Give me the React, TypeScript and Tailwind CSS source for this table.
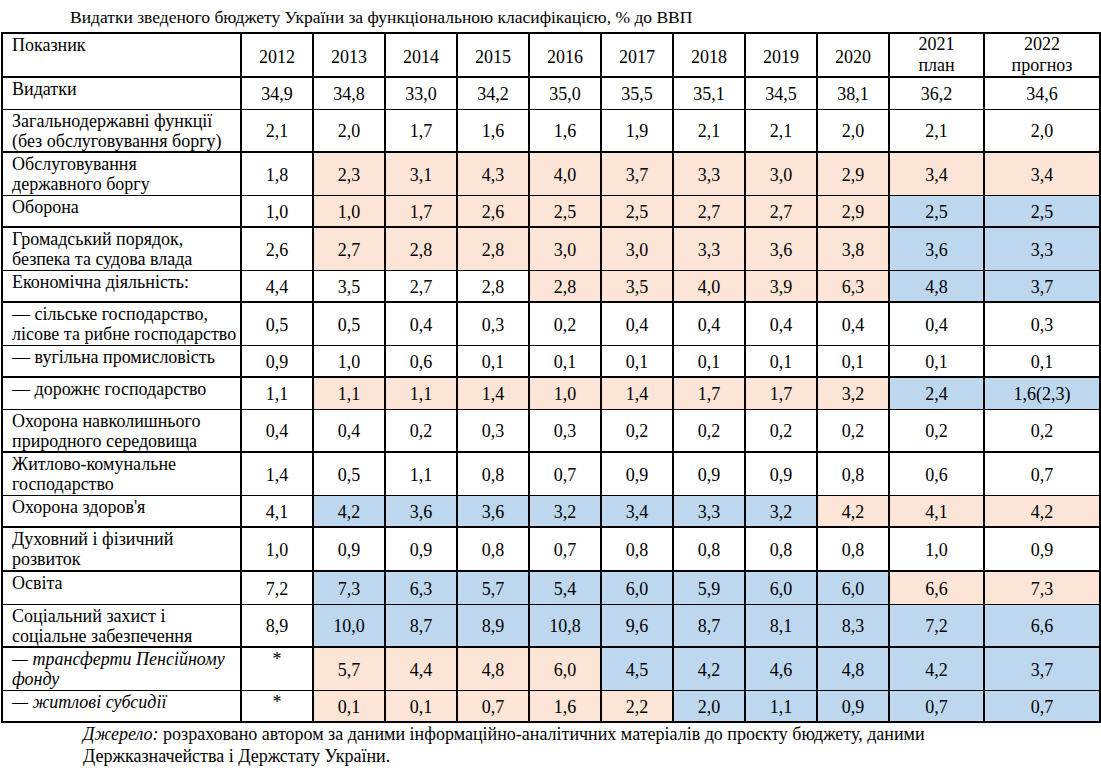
type Fill = "w" | "p" | "b"

type Row = {
  label: string[]
  italic?: boolean
  vals: string[]
  fills: string
  thick: boolean
  h: string
}

const years = ["2012", "2013", "2014", "2015", "2016", "2017", "2018", "2019", "2020"]

const rows: Row[] = [
  { label: ["Видатки"], vals: ["34,9", "34,8", "33,0", "34,2", "35,0", "35,5", "35,1", "34,5", "38,1", "36,2", "34,6"], fills: "wwwwwwwwwww", thick: false, h: "h-[32px]" },
  { label: ["Загальнодержавні функції", "(без обслуговування боргу)"], vals: ["2,1", "2,0", "1,7", "1,6", "1,6", "1,9", "2,1", "2,1", "2,0", "2,1", "2,0"], fills: "wwwwwwwwwww", thick: true, h: "h-[43px]" },
  { label: ["Обслуговування", "державного боргу"], vals: ["1,8", "2,3", "3,1", "4,3", "4,0", "3,7", "3,3", "3,0", "2,9", "3,4", "3,4"], fills: "wpppppppppp", thick: false, h: "h-[43px]" },
  { label: ["Оборона"], vals: ["1,0", "1,0", "1,7", "2,6", "2,5", "2,5", "2,7", "2,7", "2,9", "2,5", "2,5"], fills: "wppppppppbb", thick: true, h: "h-[32px]" },
  { label: ["Громадський порядок,", "безпека та судова влада"], vals: ["2,6", "2,7", "2,8", "2,8", "3,0", "3,0", "3,3", "3,6", "3,8", "3,6", "3,3"], fills: "wppppppppbb", thick: false, h: "h-[43px]" },
  { label: ["Економічна діяльність:"], vals: ["4,4", "3,5", "2,7", "2,8", "2,8", "3,5", "4,0", "3,9", "6,3", "4,8", "3,7"], fills: "wwwwpppppbb", thick: true, h: "h-[32px]" },
  { label: ["— сільське господарство,", "лісове та рибне господарство"], vals: ["0,5", "0,5", "0,4", "0,3", "0,2", "0,4", "0,4", "0,4", "0,4", "0,4", "0,3"], fills: "wwwwwwwwwww", thick: false, h: "h-[43px]" },
  { label: ["— вугільна промисловість"], vals: ["0,9", "1,0", "0,6", "0,1", "0,1", "0,1", "0,1", "0,1", "0,1", "0,1", "0,1"], fills: "wwwwwwwwwww", thick: true, h: "h-[32px]" },
  { label: ["— дорожнє господарство"], vals: ["1,1", "1,1", "1,1", "1,4", "1,0", "1,4", "1,7", "1,7", "3,2", "2,4", "1,6(2,3)"], fills: "wppppppppbb", thick: false, h: "h-[32px]" },
  { label: ["Охорона навколишнього", "природного середовища"], vals: ["0,4", "0,4", "0,2", "0,3", "0,3", "0,2", "0,2", "0,2", "0,2", "0,2", "0,2"], fills: "wwwwwwwwwww", thick: true, h: "h-[43px]" },
  { label: ["Житлово-комунальне", "господарство"], vals: ["1,4", "0,5", "1,1", "0,8", "0,7", "0,9", "0,9", "0,9", "0,8", "0,6", "0,7"], fills: "wwwwwwwwwww", thick: false, h: "h-[43px]" },
  { label: ["Охорона здоров'я"], vals: ["4,1", "4,2", "3,6", "3,6", "3,2", "3,4", "3,3", "3,2", "4,2", "4,1", "4,2"], fills: "wbbbbbbbppp", thick: true, h: "h-[32px]" },
  { label: ["Духовний і фізичний", "розвиток"], vals: ["1,0", "0,9", "0,9", "0,8", "0,7", "0,8", "0,8", "0,8", "0,8", "1,0", "0,9"], fills: "wwwwwwwwwww", thick: true, h: "h-[44px]" },
  { label: ["Освіта"], vals: ["7,2", "7,3", "6,3", "5,7", "5,4", "6,0", "5,9", "6,0", "6,0", "6,6", "7,3"], fills: "wbbbbbbbbpp", thick: false, h: "h-[33px]" },
  { label: ["Соціальний захист і", "соціальне забезпечення"], vals: ["8,9", "10,0", "8,7", "8,9", "10,8", "9,6", "8,7", "8,1", "8,3", "7,2", "6,6"], fills: "wbbbbbbbbbb", thick: true, h: "h-[43px]" },
  { label: ["— трансферти Пенсійному", "фонду"], italic: true, vals: ["*", "5,7", "4,4", "4,8", "6,0", "4,5", "4,2", "4,6", "4,8", "4,2", "3,7"], fills: "wppppbbbbbb", thick: false, h: "h-[43px]" },
  { label: ["— житлові субсидії"], italic: true, vals: ["*", "0,1", "0,1", "0,7", "1,6", "2,2", "2,0", "1,1", "0,9", "0,7", "0,7"], fills: "wpppppbbbbb", thick: true, h: "h-[32px]" },
]

const fillClass: Record<Fill, string> = {
  w: "bg-white",
  p: "bg-[#fce4d6]",
  b: "bg-[#bdd7ee]",
}

export default function App() {
  return (
    <div className="w-[1101px] h-[775px] bg-white text-black [font-family:'Liberation_Serif','Times_New_Roman',serif] text-[18px] overflow-hidden">
      {/* Title */}
      <div className="h-[32px] pl-[70px] pt-[7px] text-[17.5px] leading-[20px] whitespace-nowrap">
        Видатки зведеного бюджету України за функціональною класифікацією, % до ВВП
      </div>

      <table className="ml-[1px] w-[1098px] table-fixed border-collapse">
        <colgroup>
          <col className="w-[239px]" />
          {years.map((y) => (
            <col key={y} className="w-[72px]" />
          ))}
          <col className="w-[95px]" />
          <col className="w-[116px]" />
        </colgroup>
        <thead>
          <tr className="h-[43px]">
            <th className="border-2 border-black px-[9px] pt-[1px] align-top text-left font-normal leading-[20px]">
              Показник
            </th>
            {years.map((y) => (
              <th key={y} className="border-2 border-black align-middle text-center font-normal leading-[20px] pt-[4px]">
                {y}
              </th>
            ))}
            <th className="border-2 border-black align-middle text-center font-normal leading-[21px]">
              2021
              <br />
              план
            </th>
            <th className="border-2 border-black align-middle text-center font-normal leading-[21px]">
              2022
              <br />
              прогноз
            </th>
          </tr>
        </thead>
        <tbody>
          {rows.map((row, i) => (
            <tr key={i} className={row.h}>
              <td
                className={`border-x-2 border-black px-[9px] pt-[1px] align-top whitespace-nowrap leading-[20px] ${
                  row.thick ? "border-b-2" : "border-b"
                } ${row.italic ? "italic" : ""}`}
              >
                {row.label.map((line, j) => (
                  <div key={j}>{line}</div>
                ))}
              </td>
              {row.vals.map((v, j) => (
                <td
                  key={j}
                  className={`border-x-2 border-black text-center leading-[20px] ${
                    row.thick ? "border-b-2" : "border-b"
                  } ${v === "*" ? "align-top pt-[1px]" : "align-middle pt-[2px]"} ${fillClass[row.fills[j] as Fill]}`}
                >
                  {v}
                </td>
              ))}
            </tr>
          ))}
        </tbody>
      </table>

      {/* Source */}
      <div className="pl-[83px] leading-[22px] whitespace-nowrap">
        <span className="italic">Джерело:</span> розраховано автором за даними інформаційно-аналітичних матеріалів до проєкту бюджету, даними
        <br />
        Держказначейства і Держстату України.
      </div>
    </div>
  )
}
